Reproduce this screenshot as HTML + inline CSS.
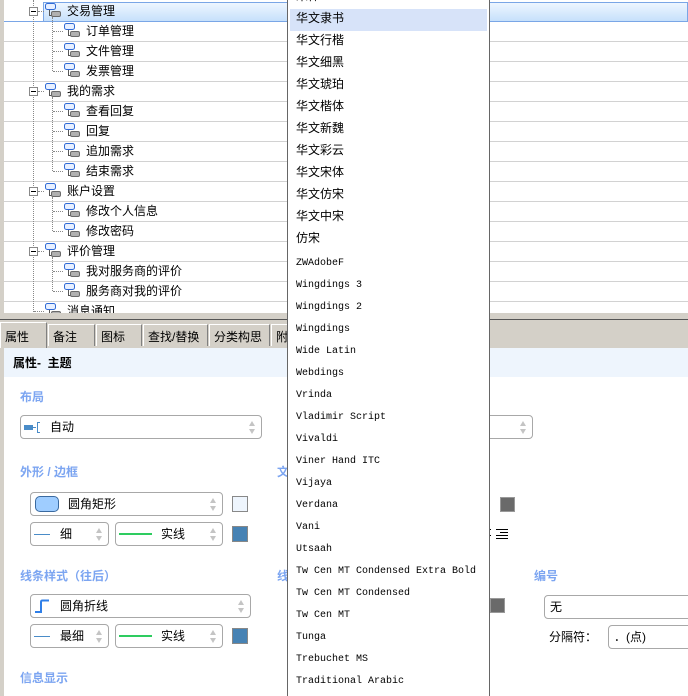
<!DOCTYPE html>
<html><head><meta charset="utf-8"><style>
*{margin:0;padding:0;box-sizing:border-box}
body{width:688px;height:696px;overflow:hidden;background:#fff;position:relative;font-family:"Liberation Sans","Noto Sans CJK SC",sans-serif;font-size:12px;color:#000}
.a{position:absolute}
.row{position:absolute;left:4px;right:0;height:20px;border-bottom:1px solid #d2d2d2}
.t{position:absolute;font-size:12px;line-height:14px;white-space:nowrap}
.ic{position:absolute;width:16px;height:15px}
.exp{position:absolute;width:9px;height:9px;border:1px solid #888;background:#fff}
.exp:after{content:"";position:absolute;left:1px;top:3px;width:5px;height:1px;background:#000}
.vd{position:absolute;width:0;border-left:1px dotted #888}
.hd{position:absolute;height:0;border-top:1px dotted #888}
.lbl{position:absolute;color:#6e9cf0;font-size:12px;font-weight:bold;line-height:14px;opacity:.9}
.sel{position:absolute;border:1px solid #a8a8a8;border-radius:4px;background:#fff;height:24px}
.sp{position:absolute;right:5px;top:5px;width:7px;height:13px}
.sp:before{content:"";position:absolute;left:0;top:0;border-left:3.5px solid transparent;border-right:3.5px solid transparent;border-bottom:5px solid #c4c4c4}
.sp:after{content:"";position:absolute;left:0;bottom:0;border-left:3.5px solid transparent;border-right:3.5px solid transparent;border-top:5px solid #c4c4c4}
.cb{position:absolute;width:16px;height:16px;border:1px solid #888}
.dd{position:absolute;left:287px;top:0;width:203px;height:696px;background:#fff;border-left:1px solid #666;border-right:1px solid #666}
.di{position:absolute;left:8px;font-family:"Liberation Mono",monospace;font-size:10px;line-height:12px;white-space:nowrap;margin-top:2px}
.dc{font-family:"Liberation Sans","Noto Sans CJK SC",sans-serif;font-size:12px;line-height:14px;margin-top:0}
.tab{position:absolute;top:324px;height:22px;border:1px solid #fff;border-right-color:#808080;border-bottom:none;font-size:12px;line-height:24px;padding-left:4px;background:#d4d0c8}
</style></head><body>
<svg width="0" height="0" style="position:absolute"><defs>
<symbol id="ti" viewBox="0 0 16 15"><rect x="0.5" y="0.5" width="10" height="6" rx="2" fill="#e8f0ff" stroke="#2f6ad6"/><path d="M4.5 7v5.5h2" stroke="#555" fill="none"/><rect x="6.5" y="8.5" width="9" height="5" rx="1.5" fill="#b0b0b0" stroke="#6a6a6a"/></symbol>
</defs></svg>

<div class="a" style="left:0;top:0;width:4px;height:320px;background:#d4d0c8"></div>
<div class="a" style="left:43px;top:2px;right:0;height:20px;border:1px solid #7aa6e6;background:linear-gradient(#eef6ff,#c6e0fb)"></div>
<div class="row" style="top:2px;border-bottom-color:#7aa6e6;height:20px"></div>
<div class="row" style="top:22px"></div><div class="row" style="top:42px"></div><div class="row" style="top:62px"></div>
<div class="row" style="top:82px"></div><div class="row" style="top:102px"></div><div class="row" style="top:122px"></div>
<div class="row" style="top:142px"></div><div class="row" style="top:162px"></div><div class="row" style="top:182px"></div>
<div class="row" style="top:202px"></div><div class="row" style="top:222px"></div><div class="row" style="top:242px"></div>
<div class="row" style="top:262px"></div><div class="row" style="top:282px"></div>
<div class="vd" style="left:33px;top:0;height:312px"></div>
<div class="vd" style="left:52px;top:17px;height:54px"></div>
<div class="vd" style="left:52px;top:97px;height:74px"></div>
<div class="vd" style="left:52px;top:197px;height:34px"></div>
<div class="vd" style="left:52px;top:257px;height:34px"></div>

<div class="exp" style="left:29px;top:7px"></div><div class="hd" style="left:38px;top:11px;width:6px"></div><svg class="ic" style="left:45px;top:3px"><use href="#ti"/></svg><div class="t" style="left:67px;top:4px">交易管理</div>
<div class="exp" style="left:29px;top:87px"></div><div class="hd" style="left:38px;top:91px;width:6px"></div><svg class="ic" style="left:45px;top:83px"><use href="#ti"/></svg><div class="t" style="left:67px;top:84px">我的需求</div>
<div class="exp" style="left:29px;top:187px"></div><div class="hd" style="left:38px;top:191px;width:6px"></div><svg class="ic" style="left:45px;top:183px"><use href="#ti"/></svg><div class="t" style="left:67px;top:184px">账户设置</div>
<div class="exp" style="left:29px;top:247px"></div><div class="hd" style="left:38px;top:251px;width:6px"></div><svg class="ic" style="left:45px;top:243px"><use href="#ti"/></svg><div class="t" style="left:67px;top:244px">评价管理</div>
<div class="hd" style="left:34px;top:311px;width:10px"></div><svg class="ic" style="left:45px;top:303px"><use href="#ti"/></svg><div class="t" style="left:67px;top:304px">消息通知</div>
<div class="hd" style="left:53px;top:31px;width:10px"></div><svg class="ic" style="left:64px;top:23px"><use href="#ti"/></svg><div class="t" style="left:86px;top:24px">订单管理</div>
<div class="hd" style="left:53px;top:51px;width:10px"></div><svg class="ic" style="left:64px;top:43px"><use href="#ti"/></svg><div class="t" style="left:86px;top:44px">文件管理</div>
<div class="hd" style="left:53px;top:71px;width:10px"></div><svg class="ic" style="left:64px;top:63px"><use href="#ti"/></svg><div class="t" style="left:86px;top:64px">发票管理</div>
<div class="hd" style="left:53px;top:111px;width:10px"></div><svg class="ic" style="left:64px;top:103px"><use href="#ti"/></svg><div class="t" style="left:86px;top:104px">查看回复</div>
<div class="hd" style="left:53px;top:131px;width:10px"></div><svg class="ic" style="left:64px;top:123px"><use href="#ti"/></svg><div class="t" style="left:86px;top:124px">回复</div>
<div class="hd" style="left:53px;top:151px;width:10px"></div><svg class="ic" style="left:64px;top:143px"><use href="#ti"/></svg><div class="t" style="left:86px;top:144px">追加需求</div>
<div class="hd" style="left:53px;top:171px;width:10px"></div><svg class="ic" style="left:64px;top:163px"><use href="#ti"/></svg><div class="t" style="left:86px;top:164px">结束需求</div>
<div class="hd" style="left:53px;top:211px;width:10px"></div><svg class="ic" style="left:64px;top:203px"><use href="#ti"/></svg><div class="t" style="left:86px;top:204px">修改个人信息</div>
<div class="hd" style="left:53px;top:231px;width:10px"></div><svg class="ic" style="left:64px;top:223px"><use href="#ti"/></svg><div class="t" style="left:86px;top:224px">修改密码</div>
<div class="hd" style="left:53px;top:271px;width:10px"></div><svg class="ic" style="left:64px;top:263px"><use href="#ti"/></svg><div class="t" style="left:86px;top:264px">我对服务商的评价</div>
<div class="hd" style="left:53px;top:291px;width:10px"></div><svg class="ic" style="left:64px;top:283px"><use href="#ti"/></svg><div class="t" style="left:86px;top:284px">服务商对我的评价</div>

<div class="a" style="left:0;top:313px;width:688px;height:8px;background:#d4d0c8"></div>
<div class="a" style="left:0;top:319px;width:688px;height:1px;background:#555"></div>
<div class="a" style="left:0;top:320px;width:688px;height:28px;background:#d4d0c8"></div>
<div class="tab" style="left:0;width:47px;top:322px;height:26px;line-height:28px;padding-left:4px">属性</div>
<div class="tab" style="left:48px;width:47px">备注</div>
<div class="tab" style="left:96px;width:46px">图标</div>
<div class="tab" style="left:143px;width:65px">查找/替换</div>
<div class="tab" style="left:209px;width:61px">分类构思</div>
<div class="tab" style="left:271px;width:30px">附</div>

<div class="a" style="left:0;top:348px;width:4px;height:348px;background:#d4d0c8"></div>
<div class="a" style="left:4px;top:348px;right:0;height:29px;background:#eef5fd"></div>
<div class="t" style="left:13px;top:356px;font-weight:bold">属性-&nbsp;&nbsp;主题</div>

<div class="lbl" style="left:20px;top:390px">布局</div>
<div class="sel" style="left:20px;top:415px;width:242px"><svg class="a" style="left:3px;top:5px" width="18" height="12"><rect x="0" y="4" width="9" height="5" fill="#4a8cc8"/><path d="M9 6.5h3M16 1.5h-2.5v10h2.5" stroke="#4a8cc8" fill="none"/></svg><div class="t" style="left:29px;top:4px">自动</div><div class="sp"></div></div>
<div class="sel" style="left:470px;top:415px;width:63px"><div class="sp"></div></div>

<div class="lbl" style="left:20px;top:465px">外形 / 边框</div>
<div class="lbl" style="left:277px;top:465px">文</div>
<div class="sel" style="left:30px;top:492px;width:193px"><div class="a" style="left:4px;top:3px;width:24px;height:16px;border:1px solid #3a6aa0;border-radius:5px;background:#9fcdff"></div><div class="t" style="left:37px;top:4px">圆角矩形</div><div class="sp"></div></div>
<div class="cb" style="left:232px;top:496px;background:#eef5fd"></div>
<div class="sel" style="left:30px;top:522px;width:79px"><div class="a" style="left:3px;top:11px;width:16px;height:1px;background:#4a8cc8"></div><div class="t" style="left:29px;top:4px">细</div><div class="sp"></div></div>
<div class="sel" style="left:115px;top:522px;width:108px"><div class="a" style="left:3px;top:10px;width:33px;height:2px;background:#2ecc60"></div><div class="t" style="left:45px;top:4px">实线</div><div class="sp"></div></div>
<div class="cb" style="left:232px;top:526px;background:#4682b4"></div>
<div class="cb" style="left:500px;top:497px;width:15px;height:15px;background:#6a6a6a;border-color:#999"></div>
<svg class="a" style="left:487px;top:528px" width="30" height="12"><path d="M0 1.5h4M0 4.5h3M0 7.5h4M0 10.5h3M9 1.5h12M13 4.5h8M9 7.5h12M9 10.5h12" stroke="#000"/></svg>

<div class="lbl" style="left:20px;top:569px">线条样式（往后）</div>
<div class="lbl" style="left:277px;top:569px">线</div>
<div class="sel" style="left:30px;top:594px;width:221px"><svg class="a" style="left:3px;top:4px" width="16" height="15"><path d="M1 13h6V3q0-1.5 1.5-1.5H15" stroke="#2f7fe8" stroke-width="2" fill="none"/></svg><div class="t" style="left:29px;top:4px">圆角折线</div><div class="sp"></div></div>
<div class="sel" style="left:30px;top:624px;width:79px"><div class="a" style="left:3px;top:11px;width:16px;height:1px;background:#4a8cc8"></div><div class="t" style="left:29px;top:4px">最细</div><div class="sp"></div></div>
<div class="sel" style="left:115px;top:624px;width:108px"><div class="a" style="left:3px;top:10px;width:33px;height:2px;background:#2ecc60"></div><div class="t" style="left:45px;top:4px">实线</div><div class="sp"></div></div>
<div class="cb" style="left:232px;top:628px;background:#4682b4"></div>
<div class="cb" style="left:490px;top:598px;width:15px;height:15px;background:#6a6a6a;border-color:#999"></div>
<div class="lbl" style="left:534px;top:569px">编号</div>
<div class="sel" style="left:544px;top:595px;width:160px"><div class="t" style="left:5px;top:4px">无</div></div>
<div class="t" style="left:549px;top:630px">分隔符：</div>
<div class="sel" style="left:608px;top:625px;width:100px"><div class="t" style="left:5px;top:4px">．(点)</div></div>
<div class="lbl" style="left:20px;top:671px">信息显示</div>

<div class="dd">
<div class="a" style="left:2px;top:9px;width:197px;height:22px;background:#d7e3f9"></div>
<div class="di dc" style="top:-11px">宋体</div>
<div class="di dc" style="top:11px">华文隶书</div>
<div class="di dc" style="top:33px">华文行楷</div>
<div class="di dc" style="top:55px">华文细黑</div>
<div class="di dc" style="top:77px">华文琥珀</div>
<div class="di dc" style="top:99px">华文楷体</div>
<div class="di dc" style="top:121px">华文新魏</div>
<div class="di dc" style="top:143px">华文彩云</div>
<div class="di dc" style="top:165px">华文宋体</div>
<div class="di dc" style="top:187px">华文仿宋</div>
<div class="di dc" style="top:209px">华文中宋</div>
<div class="di dc" style="top:231px">仿宋</div>
<div class="di" style="top:256px">ZWAdobeF</div>
<div class="di" style="top:278px">Wingdings 3</div>
<div class="di" style="top:300px">Wingdings 2</div>
<div class="di" style="top:322px">Wingdings</div>
<div class="di" style="top:344px">Wide Latin</div>
<div class="di" style="top:366px">Webdings</div>
<div class="di" style="top:388px">Vrinda</div>
<div class="di" style="top:410px">Vladimir Script</div>
<div class="di" style="top:432px">Vivaldi</div>
<div class="di" style="top:454px">Viner Hand ITC</div>
<div class="di" style="top:476px">Vijaya</div>
<div class="di" style="top:498px">Verdana</div>
<div class="di" style="top:520px">Vani</div>
<div class="di" style="top:542px">Utsaah</div>
<div class="di" style="top:564px">Tw Cen MT Condensed Extra Bold</div>
<div class="di" style="top:586px">Tw Cen MT Condensed</div>
<div class="di" style="top:608px">Tw Cen MT</div>
<div class="di" style="top:630px">Tunga</div>
<div class="di" style="top:652px">Trebuchet MS</div>
<div class="di" style="top:674px">Traditional Arabic</div>
</div>
</body></html>
